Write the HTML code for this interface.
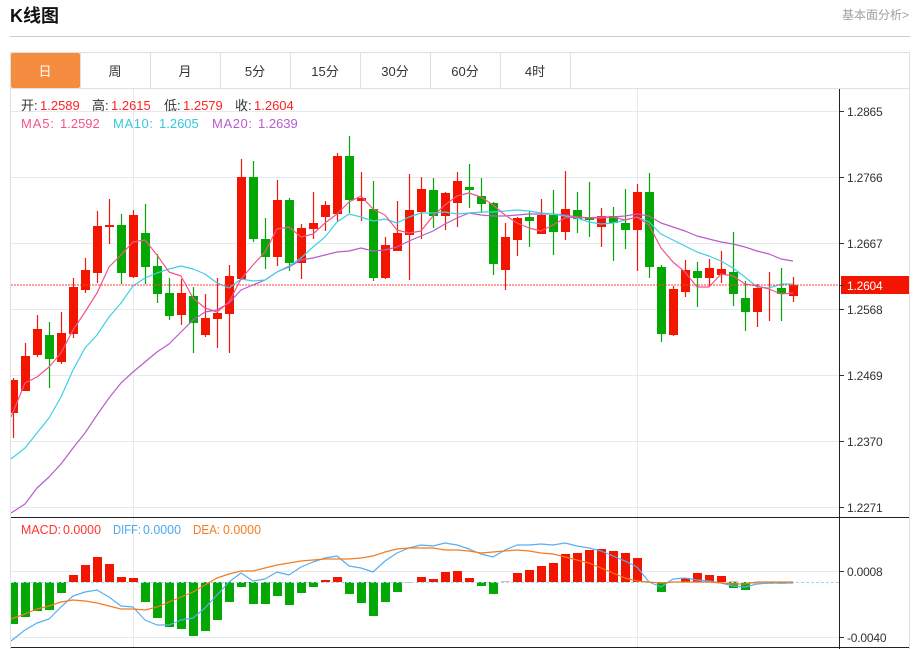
<!DOCTYPE html>
<html><head><meta charset="utf-8"><style>
html,body{margin:0;padding:0;background:#fff;width:916px;height:649px;overflow:hidden}
svg{display:block}
text{font-family:"Liberation Sans","Noto Sans CJK SC",sans-serif;font-size:13px}
.t{font-size:12px;fill:#333;letter-spacing:-.2px}
.tab{text-anchor:middle;fill:#333;font-size:13px}
</style></head><body>
<svg width="916" height="649" viewBox="0 0 916 649" xmlns="http://www.w3.org/2000/svg">
<text x="10" y="22" style="font-size:18px;font-weight:bold" fill="#111">K线图</text>
<text x="842" y="19" style="font-size:12px" fill="#a0a0a0">基本面分析&gt;</text>
<path d="M10 36.5H910" stroke="#ccc" fill="none"/>
<!-- tabs -->
<rect x="11" y="53" width="69" height="35" rx="2" fill="#f58c3f"/>
<path d="M10.5 52.5H909.5V649M10.5 52.5V649M11 88.5H909.5M80.5 53V88M150.5 53V88M220.5 53V88M290.5 53V88M360.5 53V88M430.5 53V88M500.5 53V88M570.5 53V88" stroke="#e0e0e0" fill="none"/>
<text x="45" y="76" class="tab" style="fill:#fff">日</text>
<text x="115" y="76" class="tab">周</text>
<text x="185" y="76" class="tab">月</text>
<text x="255" y="76" class="tab">5分</text>
<text x="325" y="76" class="tab">15分</text>
<text x="395" y="76" class="tab">30分</text>
<text x="465" y="76" class="tab">60分</text>
<text x="535" y="76" class="tab">4时</text>
<!-- grid -->
<path d="M11 111.5H839M11 177.5H839M11 243.5H839M11 309.5H839M11 375.5H839M11 441.5H839M11 507.5H839M11 571.5H839M11 637.5H839M133.5 89V647M637.5 89V647" stroke="#e4eaf0" fill="none"/>
<!-- wicks -->
<path fill="none" stroke="#f01808" stroke-width="1.2" d="M13.5 378V438M25.5 343V391M37.5 315V357M61.5 312V364M73.5 278V338M85.5 258V293M97.5 211V283M109.5 199V244M133.5 210V278M181.5 279V325M205.5 294V337M217.5 278V348M229.5 265V353M241.5 159V280M277.5 180V266M301.5 224V279M313.5 192V239M325.5 201V231M337.5 153V221M361.5 172V221M385.5 237V279M397.5 201V251M409.5 174V280M421.5 177V239M445.5 192V230M457.5 172V227M505.5 223V290M517.5 217V256M541.5 199V234M565.5 171V240M601.5 208V247M637.5 184V271M673.5 286V336M685.5 260V297M709.5 259V287M721.5 251V283M757.5 284V327M769.5 272V321M793.5 277V302"/>
<path fill="none" stroke="#04a804" stroke-width="1.2" d="M49.5 322V388M121.5 214V284M145.5 204V284M157.5 254V303M169.5 278V320M193.5 287V353M253.5 161V242M265.5 218V269M289.5 198V271M349.5 136V213M373.5 181V281M433.5 178V228M469.5 164V208M481.5 178V213M493.5 202V275M529.5 211V247M553.5 190V255M577.5 192V233M589.5 182V237M613.5 207V261M625.5 189V249M649.5 173V278M661.5 265V342M697.5 262V307M733.5 232V306M745.5 281V331M781.5 268V321"/>
<!-- bodies -->
<path fill="none" stroke="#f41500" stroke-width="9" d="M13.5 380V413M25.5 356V391M37.5 329V355M61.5 333V362M73.5 287V334M85.5 270V290M97.5 226V273M109.5 225V227M133.5 215V277M181.5 293V315M205.5 318V335M217.5 313V319M229.5 276V314M241.5 177V279M277.5 200V257M301.5 228V263M313.5 223V229M325.5 205V217M337.5 156V214M361.5 198V201M385.5 245V278M397.5 233V251M409.5 210V235M421.5 189V212M445.5 193V216M457.5 181V203M505.5 237V270M517.5 218V240M541.5 215V234M565.5 209V232M601.5 216V227M637.5 192V230M673.5 289V335M685.5 270V292M709.5 268V278M721.5 269V275M757.5 288V312M793.5 285V296"/>
<path fill="none" stroke="#04a804" stroke-width="9" d="M49.5 335V359M121.5 225V273M145.5 233V267M157.5 266V294M169.5 293V316M193.5 296V323M253.5 177V239M265.5 239V257M289.5 200V263M349.5 156V200M373.5 209V278M433.5 190V216M469.5 187V190M481.5 196V204M493.5 203V264M529.5 217V221M553.5 215V232M577.5 210V219M589.5 217V220M613.5 216V223M625.5 223V230M649.5 192V267M661.5 267V334M697.5 271V278M733.5 272V294M745.5 298V312M781.5 288V294"/>
<!-- MA lines -->
<g fill="none" stroke-width="1.2" stroke-linejoin="round">
<polyline stroke="#b85ccb" points="11,513 25,504 37,488 49,477 61,464 73,448 85,433 97,415 109,398 121,383 133,372 145,362 157,352 169,344 181,332 193,320 205,312 217,310 229,303 241,290 253,285 265,280 277,272 289,267 301,260 313,258 325,255 337,252 349,251 361,248 373,251 385,250 397,247 409,241 421,236 433,231 445,224 457,218 469,213 481,215 493,216 505,216 517,215 529,214 541,214 553,214 565,215 577,217 589,218 601,218 613,217 625,216 637,214 649,216 661,223 673,227 685,231 697,236 709,239 721,242 733,244 745,247 757,251 769,254 781,259 793,261"/>
<polyline stroke="#3fd0e4" points="11,459 25,448 37,433 49,418 61,397 73,370 85,348 97,335 109,317 121,303 133,286 145,278 157,273 169,269 181,266 193,269 205,274 217,283 229,288 241,279 253,281 265,280 277,272 289,266 301,258 313,247 325,237 337,222 349,214 361,217 373,221 385,219 397,223 409,217 421,213 433,213 445,212 457,214 469,213 481,212 493,212 505,211 517,210 529,211 541,213 553,214 565,216 577,218 589,222 601,224 613,223 625,220 637,217 649,222 661,234 673,240 685,246 697,252 709,256 721,261 733,268 745,277 757,287 769,288 781,284 793,284"/>
<polyline stroke="#f2558c" points="11,417 25,383 37,377 49,367 61,353 73,330 85,312 97,293 109,267 121,255 133,242 145,240 157,255 169,272 181,276 193,298 205,308 217,312 229,302 241,279 253,265 265,252 277,229 289,227 301,237 313,234 325,223 337,214 349,202 361,196 373,209 385,215 397,230 409,233 421,231 433,216 445,205 457,196 469,193 481,197 493,205 505,215 517,223 529,228 541,231 553,225 565,218 577,217 589,218 601,217 613,217 625,220 637,217 649,225 661,248 673,262 685,272 697,287 709,287 721,274 733,276 745,284 757,286 769,289 781,294 793,293"/>
</g>
<path d="M11 285H839" stroke="#ff4030" stroke-dasharray="2 1" fill="none"/>
<!-- MACD bars -->
<path fill="none" stroke="#f41500" stroke-width="9" d="M73.5 582V575M85.5 582V565M97.5 582V557M109.5 582V564M121.5 582V577M133.5 582V578M325.5 582V580M337.5 582V577M421.5 582V577M433.5 582V579M445.5 582V572M457.5 582V571M469.5 582V578M517.5 582V573M529.5 582V570M541.5 582V566M553.5 582V563M565.5 582V554M577.5 582V553M589.5 582V550M601.5 582V549M613.5 582V551M625.5 582V553M637.5 582V558M685.5 582V578M697.5 582V573M709.5 582V575M721.5 582V576"/>
<path fill="none" stroke="#f8b5b0" stroke-width="9" d="M505.5 582V581M733.5 582V581"/>
<path fill="none" stroke="#04a804" stroke-width="9" d="M13.5 582V624M25.5 582V617M37.5 582V611M49.5 582V610M61.5 582V593M145.5 582V602M157.5 582V618M169.5 582V627M181.5 582V629M193.5 582V636M205.5 582V631M217.5 582V620M229.5 582V602M241.5 582V587M253.5 582V604M265.5 582V604M277.5 582V596M289.5 582V605M301.5 582V593M313.5 582V587M349.5 582V594M361.5 582V603M373.5 582V616M385.5 582V602M397.5 582V592M481.5 582V586M493.5 582V594M661.5 582V592M733.5 582V588M745.5 582V590"/>
<path fill="none" stroke="#9adf9a" stroke-width="9" d="M409.5 582V583M649.5 582V583M757.5 582V584M769.5 582V584M781.5 582V584"/>
<path d="M11 582.5H839" stroke="#9fd8f0" stroke-dasharray="3 2" fill="none"/>
<g fill="none" stroke-width="1.2" stroke-linejoin="round">
<polyline stroke="#5aaef0" points="11,641 25,630 37,623 49,619 61,607 73,596 85,592 97,590 109,597 121,606 133,607 145,620 157,625 169,625 181,620 193,618 205,608 217,595 229,582 241,573 253,581 265,579 277,572 289,575 301,567 313,562 325,558 337,556 349,566 361,568 373,572 385,561 397,553 409,548 421,545 433,546 445,543 457,545 469,549 481,554 493,557 505,550 517,545 529,545 541,544 553,545 565,543 577,546 589,548 601,551 613,556 625,561 637,567 649,582 661,587 673,579 685,578 697,580 709,581 721,583 733,586 745,587 757,584 769,583 781,583 793,583"/>
<polyline stroke="#f47c20" points="11,619 25,614 37,609 49,606 61,602 73,600 85,601 97,603 109,606 121,609 133,609 145,610 157,607 169,602 181,597 193,592 205,585 217,578 229,574 241,571 253,571 265,568 277,565 289,563 301,561 313,560 325,559 337,559 349,559 361,558 373,556 385,552 397,549 409,548 421,548 433,548 445,550 457,550 469,551 481,553 493,552 505,551 517,550 529,551 541,553 553,554 565,557 577,560 589,563 601,568 613,573 625,578 637,581 649,582 661,583 673,582 685,582 697,582 709,582 721,583 733,584 745,584 757,582 769,582 781,582 793,582"/>
</g>
<!-- left cover & frame -->
<rect x="0" y="88" width="10" height="561" fill="#fff"/>
<path d="M10.5 89V649" stroke="#e0e0e0" fill="none"/>
<rect x="841" y="276" width="68" height="18" fill="#f41500"/>
<path d="M11 517.5H909M11 647.5H909M839.5 89V649" stroke="#222" fill="none"/>
<path d="M840 111.5h4M840 177.5h4M840 243.5h4M840 285.5h4M840 309.5h4M840 375.5h4M840 441.5h4M840 507.5h4M840 571.5h4M840 637.5h4" stroke="#333" fill="none"/>
<!-- axis labels -->
<text x="847" y="116" class="t">1.2865</text>
<text x="847" y="182" class="t">1.2766</text>
<text x="847" y="248" class="t">1.2667</text>
<text x="847" y="290" class="t" style="fill:#fff">1.2604</text>
<text x="847" y="314" class="t">1.2568</text>
<text x="847" y="380" class="t">1.2469</text>
<text x="847" y="446" class="t">1.2370</text>
<text x="847" y="512" class="t">1.2271</text>
<text x="847" y="576" class="t">0.0008</text>
<text x="847" y="642" class="t">-0.0040</text>
<!-- OHLC -->
<text x="21" y="110" fill="#333">开:</text><text x="40" y="110" fill="#f22">1.2589</text>
<text x="92" y="110" fill="#333">高:</text><text x="111" y="110" fill="#f22">1.2615</text>
<text x="164" y="110" fill="#333">低:</text><text x="183" y="110" fill="#f22">1.2579</text>
<text x="235" y="110" fill="#333">收:</text><text x="254" y="110" fill="#f22">1.2604</text>
<text x="21" y="128" fill="#f2558c" textLength="33">MA5:</text><text x="60" y="128" fill="#f2558c">1.2592</text>
<text x="113" y="128" fill="#36c8e0" textLength="40">MA10:</text><text x="159" y="128" fill="#36c8e0">1.2605</text>
<text x="212" y="128" fill="#b85ccb" textLength="40">MA20:</text><text x="258" y="128" fill="#b85ccb">1.2639</text>
<text x="21" y="534" fill="#f33" textLength="40" lengthAdjust="spacingAndGlyphs">MACD:</text><text x="63" y="534" fill="#f33" textLength="38" lengthAdjust="spacingAndGlyphs">0.0000</text>
<text x="113" y="534" fill="#4aa8f0" textLength="28" lengthAdjust="spacingAndGlyphs">DIFF:</text><text x="143" y="534" fill="#4aa8f0" textLength="38" lengthAdjust="spacingAndGlyphs">0.0000</text>
<text x="193" y="534" fill="#f47c20" textLength="27" lengthAdjust="spacingAndGlyphs">DEA:</text><text x="223" y="534" fill="#f47c20" textLength="38" lengthAdjust="spacingAndGlyphs">0.0000</text>
</svg>
</body></html>
